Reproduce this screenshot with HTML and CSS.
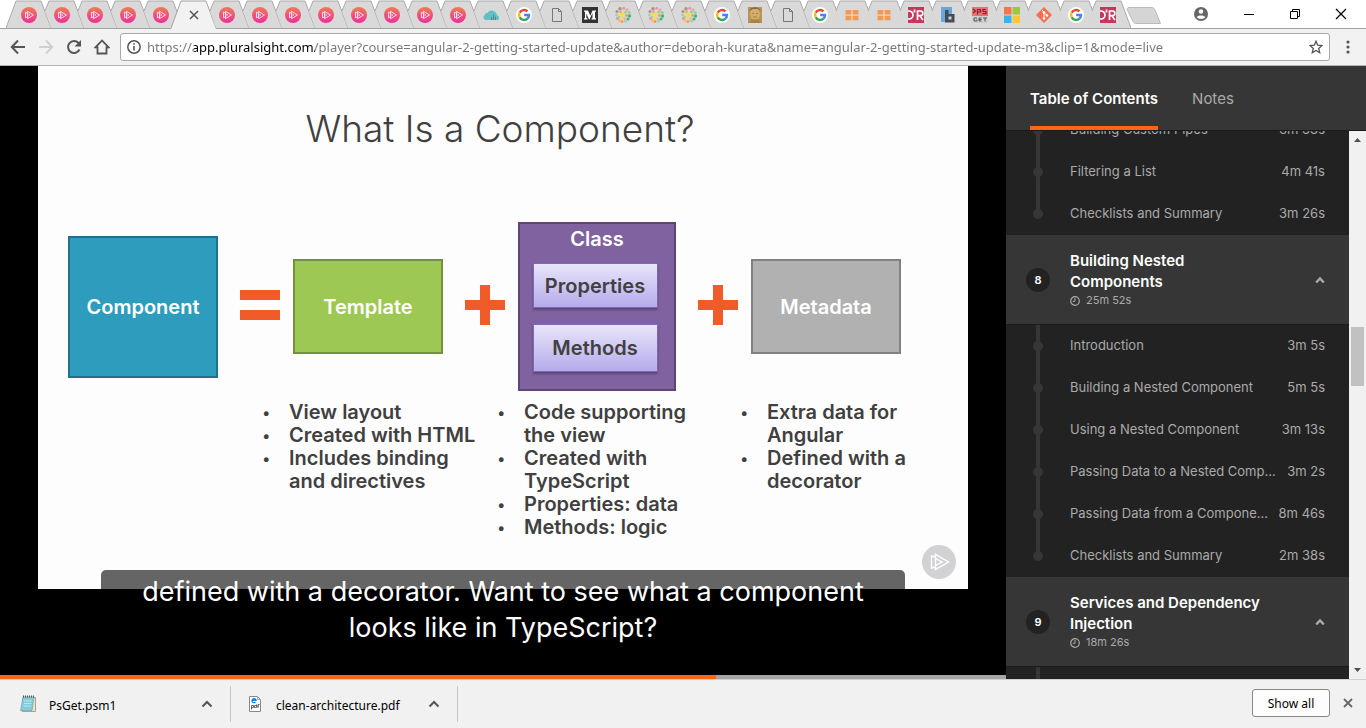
FILE: index.html
```html
<!DOCTYPE html>
<html lang="en">
<head>
<meta charset="utf-8">
<title>Angular 2: Getting Started</title>
<link rel="stylesheet" href="styles.css">
</head>
<body>
<svg class="sprite" aria-hidden="true">
  <defs>
    <linearGradient id="ps-fill" x1="0" y1="0" x2="0" y2="1"><stop offset="0" stop-color="#f37a52"/><stop offset="1" stop-color="#ee2f9b"/></linearGradient>
  </defs>
  <symbol id="shape-full" viewBox="0 0 45 28"><path d="M0 28 10 1H35L45 28Z" fill="#d9d9d9"/><path d="M0 28 10 1H35L45 28" fill="none" stroke="#aaa"/></symbol>
  <symbol id="shape" viewBox="0 0 45 28"><path d="M6 11 10 1H35L45 28H12Z" fill="#d9d9d9"/><path d="M6 11 10 1H35L45 28" fill="none" stroke="#aaa"/></symbol>
  <symbol id="shape-active" viewBox="0 0 45 29"><path d="M0 29 10 1H35L45 29Z" fill="#f2f2f2"/><path d="M0 28 10 1H35L45 28" fill="none" stroke="#a2a2a2"/></symbol>
  <symbol id="ps" viewBox="0 0 16 16"><circle cx="8" cy="8" r="8" fill="url(#ps-fill)"/><path d="M4.500 5.200V10.800L6.500 9.800M4.500 5.200 6.500 6.200M6.500 4.300V11.700L12.500 8Z" fill="none" stroke="#fde" stroke-width="1"/><path d="M6.500 6.500 9 8 6.500 9.500" fill="none" stroke="#fde" stroke-width=".7"/></symbol>
  <symbol id="google" viewBox="0 0 16 16"><circle cx="8" cy="8" r="8" fill="#fff"/><g fill="none" stroke-width="2.400"><path d="M11.500 4.400A5 5 0 0 0 3.700 5.600" stroke="#ea4335"/><path d="M3.700 5.600A5 5 0 0 0 3.700 10.400" stroke="#fbbc05"/><path d="M3.700 10.400A5 5 0 0 0 11.400 11.700" stroke="#34a853"/><path d="M11.400 11.700A5 5 0 0 0 13 8H8.200" stroke="#4285f4"/></g></symbol>
  <symbol id="doc" viewBox="0 0 16 16"><path d="M3.500 1.500H9.500L12.500 4.500V14.500H3.500ZM9.500 1.500V4.500H12.500" fill="none" stroke="#777"/></symbol>
  <symbol id="cloud" viewBox="0 0 16 16"><path d="M2.500 13A2.800 2.800 0 0 1 1.500 8.200A3 3 0 0 1 4.500 6A4.500 4.500 0 0 1 12 5A3 3 0 0 1 13.800 8.200A2.500 2.500 0 0 1 14.500 13Z" fill="#5fc0c5"/><path d="M8.500 10V13M10.500 7.500V13M12.500 9.500V13" stroke="#488c94"/></symbol>
  <symbol id="medium" viewBox="0 0 16 16"><path d="M0 0H16V16H0Z" fill="#333"/><path d="M2 3.500H6L8.300 8.800 10.500 3.500H14V4.500L13 5V11L14 11.500V12.500H9.500V11.500L10.500 11V6L7.500 12.500H7L4.300 6.400V11L5.500 11.500V12.500H2V11.500L3 11V5L2 4.500Z" fill="#fff"/></symbol>
  <symbol id="flower" viewBox="0 0 16 16">
    <g fill="#b1907f"><circle cx="5" cy="1.800" r="1.700"/><circle cx="2" cy="4.500" r="1.500"/></g>
    <g fill="#e79aa5"><circle cx="8.700" cy="1.300" r="1.500"/><circle cx="5.500" cy="4.800" r="1.300"/></g>
    <g fill="#f4a3a0"><circle cx="12" cy="2.800" r="1.600"/></g>
    <g fill="#8fd3a0"><circle cx="10.500" cy="5.200" r="1.400"/><circle cx="14.200" cy="5.500" r="1.600"/></g>
    <g fill="#3fb87a"><circle cx="14.500" cy="9" r="1.700"/><circle cx="13" cy="12" r="1.600"/></g>
    <g fill="#8ed2dc"><circle cx="1.500" cy="8" r="1.400"/><circle cx="10.500" cy="14" r="1.500"/><circle cx="3.800" cy="10" r="1.300"/></g>
    <g fill="#f79c61"><circle cx="2.500" cy="11.500" r="1.600"/><circle cx="7" cy="14.500" r="1.500"/><circle cx="11.500" cy="8.500" r="1.400"/></g>
    <g fill="#f3b98b"><circle cx="4.500" cy="13.500" r="1.500"/><circle cx="9.500" cy="11.500" r="1.400"/></g>
    <g fill="#f5df45"><circle cx="7.500" cy="7.500" r="2"/><circle cx="6.500" cy="10.500" r="1.600"/><circle cx="4" cy="7" r="1.200"/></g>
  </symbol>
  <symbol id="photo" viewBox="0 0 16 16"><path d="M1 0H15V16H1Z" fill="#ba9356"/><ellipse cx="8" cy="7" rx="5" ry="6" fill="#d4ac6c"/><path d="M2 4C4-1 12-1 14 4L11 2H6Z" fill="#8c6937"/><path d="M2 16 5 12.500H11L14 16Z" fill="#a8803f"/><path d="M5 6.500H7M9 6.500H11M6 10H10" stroke="#9b7440" stroke-width=".8"/></symbol>
  <symbol id="blocks" viewBox="0 0 16 16"><path d="M1.500 3H7.300V7.500H1.500ZM8.700 3H14.500V7.500H8.700ZM1.500 8.700H7.300V13.200H1.500ZM8.700 8.700H14.500V13.200H8.700Z" fill="#f8994d"/></symbol>
  <symbol id="oreilly" viewBox="0 0 16 16"><path d="M0 0H16V16H0Z" fill="#c7365b"/><path d="M0 4H1A4 4 0 0 1 1 12H0M6.500 2.500V5.500M9.500 13V4H12.500A2.300 2.300 0 0 1 12.500 8.700H9.500M12 9 15 13" fill="none" stroke="#fff" stroke-width="1.700"/></symbol>
  <symbol id="bitly" viewBox="0 0 16 16"><path d="M1 0H12V15H1Z" fill="#68a7db"/><path d="M5 3H8.500V7H14.500V15.500H5Z" fill="#454c54"/><path d="M8.500 9.500H11.500V12.500H8.500Z" fill="#c5d7e6"/></symbol>
  <symbol id="psget" viewBox="0 0 16 16"><path d="M0 0H16V9H0Z" fill="#f26d6d"/><path d="M0 9H16V16H0Z" fill="#d0d0d0"/><path d="M1 2 3.500 4 1 6M5.500 7.500V2.500H8.500V5H5.500M14 2.500H11V4.500H14V6.700H10.500" fill="none" stroke="#633" stroke-width="1.200"/><path d="M5 11H2V14H5V12.500M9.500 11H7V14H9.500M7 12.500H9.500M11 11H15M13 11V14.500" fill="none" stroke="#555"/></symbol>
  <symbol id="windows" viewBox="0 0 16 16"><path d="M0 0H7.500V7.500H0Z" fill="#f8734e"/><path d="M8.500 0H16V7.500H8.500Z" fill="#9aca3c"/><path d="M0 8.500H7.500V16H0Z" fill="#37b4ed"/><path d="M8.500 8.500H16V16H8.500Z" fill="#fdc733"/></symbol>
  <symbol id="git" viewBox="0 0 16 16"><path d="M8 0 16 8 8 16 0 8Z" fill="#f4704f"/><path d="M6 3 8 5.500V11.500M8 5.500 11 8.500" stroke="#fff" fill="none"/><g fill="#fff"><circle cx="8" cy="5.500" r="1.300"/><circle cx="8" cy="11.500" r="1.300"/><circle cx="11" cy="8.500" r="1.300"/></g></symbol>
  <symbol id="chevron" viewBox="0 0 12 12"><path d="M1.500 8.500 6 4 10.500 8.500" fill="none" stroke="currentColor" stroke-width="2"/></symbol>
  <symbol id="chevron-bold" viewBox="0 0 10 10"><path d="M1.200 7.500 5 3.500 8.800 7.500" fill="none" stroke="currentColor" stroke-width="2.400"/></symbol>
  <symbol id="clock" viewBox="0 0 10 10"><circle cx="5" cy="5" r="4.300" fill="none" stroke="currentColor" stroke-width="1.200"/><path d="M5 2V5.300H2.700" fill="none" stroke="currentColor"/></symbol>
</svg>

<header class="tabstrip">
  <nav class="tabs" aria-label="Open tabs">
    <button class="tab" aria-label="Pluralsight"><svg class="tab-shape"><use href="#shape-full"/></svg><svg class="tab-icon"><use href="#ps"/></svg></button>
    <button class="tab" aria-label="Pluralsight"><svg class="tab-shape"><use href="#shape"/></svg><svg class="tab-icon"><use href="#ps"/></svg></button>
    <button class="tab" aria-label="Pluralsight"><svg class="tab-shape"><use href="#shape"/></svg><svg class="tab-icon"><use href="#ps"/></svg></button>
    <button class="tab" aria-label="Pluralsight"><svg class="tab-shape"><use href="#shape"/></svg><svg class="tab-icon"><use href="#ps"/></svg></button>
    <button class="tab" aria-label="Pluralsight"><svg class="tab-shape"><use href="#shape"/></svg><svg class="tab-icon"><use href="#ps"/></svg></button>
    <button class="tab tab-active" aria-label="Close tab"><svg class="tab-shape"><use href="#shape-active"/></svg><svg class="tab-icon" viewBox="0 0 16 16"><path d="M4 4 12 12M12 4 4 12" stroke="#555" stroke-width="1.500"/></svg></button>
    <button class="tab" aria-label="Pluralsight"><svg class="tab-shape"><use href="#shape"/></svg><svg class="tab-icon"><use href="#ps"/></svg></button>
    <button class="tab" aria-label="Pluralsight"><svg class="tab-shape"><use href="#shape"/></svg><svg class="tab-icon"><use href="#ps"/></svg></button>
    <button class="tab" aria-label="Pluralsight"><svg class="tab-shape"><use href="#shape"/></svg><svg class="tab-icon"><use href="#ps"/></svg></button>
    <button class="tab" aria-label="Pluralsight"><svg class="tab-shape"><use href="#shape"/></svg><svg class="tab-icon"><use href="#ps"/></svg></button>
    <button class="tab" aria-label="Pluralsight"><svg class="tab-shape"><use href="#shape"/></svg><svg class="tab-icon"><use href="#ps"/></svg></button>
    <button class="tab" aria-label="Pluralsight"><svg class="tab-shape"><use href="#shape"/></svg><svg class="tab-icon"><use href="#ps"/></svg></button>
    <button class="tab" aria-label="Pluralsight"><svg class="tab-shape"><use href="#shape"/></svg><svg class="tab-icon"><use href="#ps"/></svg></button>
    <button class="tab" aria-label="Pluralsight"><svg class="tab-shape"><use href="#shape"/></svg><svg class="tab-icon"><use href="#ps"/></svg></button>
    <button class="tab" aria-label="Cloud"><svg class="tab-shape"><use href="#shape"/></svg><svg class="tab-icon"><use href="#cloud"/></svg></button>
    <button class="tab" aria-label="Google"><svg class="tab-shape"><use href="#shape"/></svg><svg class="tab-icon"><use href="#google"/></svg></button>
    <button class="tab" aria-label="Document"><svg class="tab-shape"><use href="#shape"/></svg><svg class="tab-icon"><use href="#doc"/></svg></button>
    <button class="tab" aria-label="Medium"><svg class="tab-shape"><use href="#shape"/></svg><svg class="tab-icon"><use href="#medium"/></svg></button>
    <button class="tab" aria-label="Blog"><svg class="tab-shape"><use href="#shape"/></svg><svg class="tab-icon"><use href="#flower"/></svg></button>
    <button class="tab" aria-label="Blog"><svg class="tab-shape"><use href="#shape"/></svg><svg class="tab-icon"><use href="#flower"/></svg></button>
    <button class="tab" aria-label="Blog"><svg class="tab-shape"><use href="#shape"/></svg><svg class="tab-icon"><use href="#flower"/></svg></button>
    <button class="tab" aria-label="Google"><svg class="tab-shape"><use href="#shape"/></svg><svg class="tab-icon"><use href="#google"/></svg></button>
    <button class="tab" aria-label="Profile"><svg class="tab-shape"><use href="#shape"/></svg><svg class="tab-icon"><use href="#photo"/></svg></button>
    <button class="tab" aria-label="Document"><svg class="tab-shape"><use href="#shape"/></svg><svg class="tab-icon"><use href="#doc"/></svg></button>
    <button class="tab" aria-label="Google"><svg class="tab-shape"><use href="#shape"/></svg><svg class="tab-icon"><use href="#google"/></svg></button>
    <button class="tab" aria-label="Blocks"><svg class="tab-shape"><use href="#shape"/></svg><svg class="tab-icon"><use href="#blocks"/></svg></button>
    <button class="tab" aria-label="Blocks"><svg class="tab-shape"><use href="#shape"/></svg><svg class="tab-icon"><use href="#blocks"/></svg></button>
    <button class="tab" aria-label="O'Reilly"><svg class="tab-shape"><use href="#shape"/></svg><svg class="tab-icon"><use href="#oreilly"/></svg></button>
    <button class="tab" aria-label="Article"><svg class="tab-shape"><use href="#shape"/></svg><svg class="tab-icon"><use href="#bitly"/></svg></button>
    <button class="tab" aria-label="PsGet"><svg class="tab-shape"><use href="#shape"/></svg><svg class="tab-icon"><use href="#psget"/></svg></button>
    <button class="tab" aria-label="Microsoft"><svg class="tab-shape"><use href="#shape"/></svg><svg class="tab-icon"><use href="#windows"/></svg></button>
    <button class="tab" aria-label="Git"><svg class="tab-shape"><use href="#shape"/></svg><svg class="tab-icon"><use href="#git"/></svg></button>
    <button class="tab" aria-label="Google"><svg class="tab-shape"><use href="#shape"/></svg><svg class="tab-icon"><use href="#google"/></svg></button>
    <button class="tab" aria-label="O'Reilly"><svg class="tab-shape"><use href="#shape"/></svg><svg class="tab-icon"><use href="#oreilly"/></svg></button>
  </nav>
  <button class="new-tab" aria-label="New tab"><svg width="36" height="18" viewBox="0 0 36 18"><path d="M2 .5H26Q28 .5 29 3L34.500 16.500H10Q8 16.500 7 14.500L1 2Z" fill="#d5d5d5" stroke="#bbb"/></svg></button>
  <div class="window-buttons">
    <button class="account" aria-label="Account"><svg width="14" height="14" viewBox="0 0 14 14"><circle cx="7" cy="7" r="7" fill="#666"/><circle cx="7" cy="4.500" r="2.200" fill="#fff"/><path d="M2.800 10.200C3.500 7.800 10.500 7.800 11.200 10.200 9.500 12.500 4.500 12.500 2.800 10.200" fill="#fff"/></svg></button>
    <button aria-label="Minimize"><svg width="12" height="12" viewBox="0 0 12 12"><path d="M1 6.500H11" stroke="#000"/></svg></button>
    <button aria-label="Restore"><svg width="12" height="12" viewBox="0 0 12 12"><path d="M1.500 3.500H8.500V10.500H1.500ZM3.500 3.500V1.500H10.500V8.500H8.500" fill="none" stroke="#000"/></svg></button>
    <button aria-label="Close window"><svg width="12" height="12" viewBox="0 0 12 12"><path d="M1 1 11 11M11 1 1 11" stroke="#000" stroke-width="1.200"/></svg></button>
  </div>
</header>

<div class="toolbar">
  <button aria-label="Back"><svg width="16" height="16" viewBox="0 0 16 16"><path d="M15 8H2M8 1.500 1.800 8 8 14.500" fill="none" stroke="#555" stroke-width="2"/></svg></button>
  <button aria-label="Forward"><svg width="16" height="16" viewBox="0 0 16 16"><path d="M1 8H14M8 1.500 14.200 8 8 14.500" fill="none" stroke="#d0d0d0" stroke-width="2"/></svg></button>
  <button aria-label="Reload"><svg width="16" height="16" viewBox="0 0 16 16"><path d="M13.500 10.500A6 6 0 1 1 12.500 4L14 5.500" fill="none" stroke="#555" stroke-width="2"/><path d="M15 1V7.500H8.500Z" fill="#555"/></svg></button>
  <button aria-label="Home"><svg width="16" height="16" viewBox="0 0 16 16"><path d="M8 1.500 1.500 8.300H3.500V14.500H12.500V8.300H14.500Z" fill="none" stroke="#555" stroke-width="1.800"/></svg></button>
  <div class="address">
    <svg width="14" height="14" viewBox="0 0 14 14"><circle cx="7" cy="7" r="6.200" fill="none" stroke="#555" stroke-width="1.500"/><path d="M7 6V10.500M7 3.200V4.800" stroke="#555" stroke-width="1.600"/></svg>
    <input class="url" type="text" aria-label="Address" value="https://app.pluralsight.com/player?course=angular-2-getting-started-update&amp;author=deborah-kurata&amp;name=angular-2-getting-started-update-m3&amp;clip=1&amp;mode=live">
    <button aria-label="Bookmark"><svg width="14" height="14" viewBox="0 0 14 14"><path d="M7 1.200 8.700 5.200 13 5.600 9.700 8.400 10.700 12.700 7 10.400 3.300 12.700 4.300 8.400 1 5.600 5.300 5.200Z" fill="none" stroke="#555" stroke-width="1.300"/></svg></button>
  </div>
  <button class="menu" aria-label="Menu"><svg width="4" height="14" viewBox="0 0 4 14"><g fill="#555"><circle cx="2" cy="2" r="1.600"/><circle cx="2" cy="7" r="1.600"/><circle cx="2" cy="12" r="1.600"/></g></svg></button>
</div>

<main class="course">
  <section class="player">
    <article class="slide">
      <h1>What Is a Component?</h1>
      <div class="diagram">
        <div class="box box-component">Component</div>
        <svg class="operator" viewBox="0 0 40 40"><path d="M0 5H40V15H0ZM0 25H40V35H0Z" fill="#f15a29"/></svg>
        <div class="box box-template">Template</div>
        <svg class="operator" viewBox="0 0 40 40"><path d="M15 0H25V15H40V25H25V40H15V25H0V15H15Z" fill="#f15a29"/></svg>
        <div class="box box-class">
          <span>Class</span>
          <div class="member">Properties</div>
          <div class="member">Methods</div>
        </div>
        <svg class="operator" viewBox="0 0 40 40"><path d="M15 0H25V15H40V25H25V40H15V25H0V15H15Z" fill="#f15a29"/></svg>
        <div class="box box-metadata">Metadata</div>
      </div>
      <div class="notes">
        <ul>
          <li>View layout</li>
          <li>Created with HTML</li>
          <li>Includes binding<br>and directives</li>
        </ul>
        <ul>
          <li>Code supporting<br>the view</li>
          <li>Created with<br>TypeScript</li>
          <li>Properties: data</li>
          <li>Methods: logic</li>
        </ul>
        <ul>
          <li>Extra data for<br>Angular</li>
          <li>Defined with a<br>decorator</li>
        </ul>
      </div>
      <svg class="watermark" viewBox="0 0 34 34"><circle cx="17" cy="17" r="17" fill="#d2d1d3"/><path d="M13.500 9.500V24.500L26.500 17ZM13.500 12 9.500 11V23L13.500 22M13.500 13.500 20 17 13.500 20.500" fill="none" stroke="#fff" stroke-width="1.400"/></svg>
    </article>
    <p class="caption">defined with a decorator. Want to see what a component<br>looks like in TypeScript?</p>
    <div class="progress"><div class="progress-played"></div></div>
  </section>

  <aside class="sidebar">
    <nav class="side-tabs">
      <button class="side-tab side-tab-on">Table of Contents</button>
      <button class="side-tab">Notes</button>
    </nav>
    <div class="contents">
      <div class="modules">
        <ul class="clips clips-scrolled">
          <li><a href="#">Building Custom Pipes</a><span>6m 33s</span></li>
          <li><a href="#">Filtering a List</a><span>4m 41s</span></li>
          <li><a href="#">Checklists and Summary</a><span>3m 26s</span></li>
        </ul>
        <div class="module">
          <span class="module-number">8</span>
          <div class="module-text"><h2>Building Nested Components</h2><p><svg width="10" height="10"><use href="#clock"/></svg>25m 52s</p></div>
          <button aria-label="Collapse module 8"><svg width="10" height="10"><use href="#chevron-bold"/></svg></button>
        </div>
        <ul class="clips">
          <li><a href="#">Introduction</a><span>3m 5s</span></li>
          <li><a href="#">Building a Nested Component</a><span>5m 5s</span></li>
          <li><a href="#">Using a Nested Component</a><span>3m 13s</span></li>
          <li><a href="#">Passing Data to a Nested Comp…</a><span>3m 2s</span></li>
          <li><a href="#">Passing Data from a Compone…</a><span>8m 46s</span></li>
          <li><a href="#">Checklists and Summary</a><span>2m 38s</span></li>
        </ul>
        <div class="module">
          <span class="module-number">9</span>
          <div class="module-text"><h2>Services and Dependency Injection</h2><p><svg width="10" height="10"><use href="#clock"/></svg>18m 26s</p></div>
          <button aria-label="Collapse module 9"><svg width="10" height="10"><use href="#chevron-bold"/></svg></button>
        </div>
        <div class="clips-next"></div>
      </div>
      <div class="scrollbar">
        <svg width="7" height="4" viewBox="0 0 7 4"><path d="M0 4 3.500 0 7 4Z" fill="#505050"/></svg>
        <div class="track"><div class="thumb"></div></div>
        <svg width="7" height="4" viewBox="0 0 7 4"><path d="M0 0 3.500 4 7 0Z" fill="#505050"/></svg>
      </div>
    </div>
  </aside>
</main>

<footer class="downloads">
  <div class="download">
    <svg width="18" height="18" viewBox="0 0 18 18"><path d="M4 2.500H16.500V16.500H3Z" fill="#e9e4cf" stroke="#b0a27f"/><path d="M4 2H15L13 15.500H1.500Z" fill="#86cbd9" stroke="#5a9dac" stroke-width=".6"/><path d="M5 6H13M5 8.500H12.500M4.500 11H12" stroke="#b8e4ec"/><path d="M4 1.500H15" stroke="#555" stroke-width="2" stroke-dasharray="1 1"/></svg>
    <span>PsGet.psm1</span>
    <button aria-label="Options for PsGet.psm1"><svg width="12" height="12"><use href="#chevron"/></svg></button>
  </div>
  <div class="download">
    <svg width="18" height="18" viewBox="0 0 18 18"><path d="M3.500 1.500H11.500L14.500 4.500V16.500H3.500Z" fill="#fff" stroke="#888"/><path d="M11.500 1.500V4.500H14.500" fill="none" stroke="#aaa"/><path d="M6 5.300H10A2 2 0 1 0 9.500 7" fill="none" stroke="#1683d8" stroke-width="1.400"/><path d="M5.500 14.500V10.500H7.500V12.500H5.500M10.500 9.500V12.500H8.500V10.500H10.500M12 13V9.500H13.500M11.500 11H13" fill="none" stroke="#444" stroke-width=".8"/></svg>
    <span>clean-architecture.pdf</span>
    <button aria-label="Options for clean-architecture.pdf"><svg width="12" height="12"><use href="#chevron"/></svg></button>
  </div>
  <button class="show-all">Show all</button>
  <button class="dismiss" aria-label="Close downloads bar"><svg width="10" height="10" viewBox="0 0 10 10"><path d="M1 1 9 9M9 1 1 9" stroke="#666" stroke-width="1.800"/></svg></button>
</footer>
</body>
</html>
```
FILE: styles.css
```css
* { box-sizing: border-box; }
body { margin: 0; height: 100vh; display: flex; flex-direction: column; overflow: hidden; background: #fff; font-family: "Noto Sans", sans-serif; }
button { padding: 0; border: 0; background: none; font: inherit; color: inherit; display: flex; align-items: center; justify-content: center; }
svg { display: block; flex: none; }
h1, h2, p, ul { margin: 0; padding: 0; font-weight: inherit; }
ul { list-style: none; }
.sprite { position: absolute; width: 0; height: 0; }

.tabstrip { flex: none; height: 28px; display: flex; padding-left: 12px; background: #fff; }
.tabs { flex: 0 1 1112px; display: flex; min-width: 0; }
.tab { flex: 0 1 33px; min-width: 0; position: relative; }
.tab:nth-child(n+25) { flex-basis: 32px; }
.tab-shape { position: absolute; top: 0; left: -6px; width: 45px; height: 28px; overflow: visible; }
.tab-active .tab-shape { height: 29px; }
.tab-icon { position: relative; width: 16px; height: 16px; margin-top: 2px; }
.new-tab { margin: 7px 0 0 2px; align-items: flex-start; }
.window-buttons { margin-left: auto; padding-right: 2px; display: flex; }
.window-buttons button { width: 46px; height: 27px; }
.window-buttons .account { margin-right: 2px; }

.toolbar { flex: none; height: 38px; display: flex; align-items: center; gap: 12px; padding: 0 15px 0 10px; background: #f2f2f2; border-top: 1px solid #a2a2a2; border-bottom: 1px solid #b0b5b0; }
.toolbar > button { width: 16px; height: 28px; }
.address { flex: 1; min-width: 0; height: 28px; display: flex; align-items: center; gap: 6px; margin: 0 3px 0 -2px; padding: 0 6px; background: #fff; border: 1px solid #a9a9a9; border-radius: 3px; }
.url { flex: 1; min-width: 0; height: 24px; padding: 0; border: 0; outline: 0; font: 13px "Noto Sans", sans-serif; color: #767676; background: linear-gradient(to right, #767676 47px, #000 47px 168px, #767676 168px); -webkit-background-clip: text; background-clip: text; -webkit-text-fill-color: transparent; }
.toolbar > .menu { width: 6px; }

.course { flex: 1; min-height: 0; display: flex; font-family: Inter, sans-serif; }
.player { flex: 1; min-width: 0; position: relative; display: flex; flex-direction: column; background: #000; }
.slide { position: relative; height: 523px; margin: 0 38px; padding-top: 40px; background: #fefdfe; color: #404040; font-weight: 600; font-size: 20px; }
.slide h1 { height: 116px; padding-right: 6px; text-align: center; font-size: 37px; line-height: 46px; font-weight: 300; }
.diagram { display: flex; align-items: center; justify-content: space-between; padding: 0 67px 0 30px; color: #fff; }
.box { display: flex; align-items: center; justify-content: center; width: 150px; height: 95px; border: 2px solid; }
.box-component { height: 142px; background: #2d9cbd; border-color: #1f7189; }
.box-template { background: #9dc853; border-color: #72933b; }
.box-metadata { background: #b1b1b1; border-color: #818181; }
.box-class { width: 158px; height: 169px; flex-direction: column; justify-content: flex-start; padding-top: 3px; background: #8162a0; border-color: #5d4675; line-height: 24px; }
.member { width: 125px; height: 45px; margin: 12px 4px 0 0; display: flex; align-items: center; justify-content: center; background: linear-gradient(#e9e5fb, #b5abec); border: 1px solid #7d68b3; box-shadow: 0 2px 2px #5d4675; color: #404040; }
.member + .member { margin-top: 16px; height: 48px; }
.operator { width: 40px; height: 40px; margin: 0 0 3px 8px; }
.notes { display: flex; margin-top: 10px; padding-left: 224px; line-height: 23px; }
.notes ul { width: 235px; }
.notes ul + ul { width: 243px; }
.notes ul:last-child { width: 200px; }
.notes li { display: flex; }
.notes li::before { content: "•"; width: 27px; font-weight: 400; font-size: 15px; }
.watermark { position: absolute; right: 12px; bottom: 10px; width: 34px; height: 34px; }
.caption { position: absolute; left: 101px; right: 101px; top: 504px; padding-top: 4px; height: 80px; border-radius: 5px; background: rgba(0,0,0,.6); color: #fff; text-align: center; font-size: 27px; line-height: 36px; font-weight: 400; }
.progress { margin-top: auto; height: 4px; background: #a5a5a5; }
.progress-played { width: 71.2%; height: 4px; background: #ff6516; }

.sidebar { width: 360px; flex: none; display: flex; flex-direction: column; background: #222; color: #aaa; font-size: 13px; }
.side-tabs { flex: none; height: 65px; display: flex; gap: 34px; padding-left: 24px; background: #363636; border-bottom: 1px solid #1a1a1a; font-size: 15px; }
.side-tab { border-top: 4px solid transparent; border-bottom: 4px solid transparent; }
.side-tab-on { color: #fff; font-weight: 600; border-bottom-color: #ff6516; }
.contents { flex: 1; min-height: 0; display: flex; }
.modules { flex: 1; min-width: 0; overflow: hidden; }
.clips li { position: relative; height: 42px; display: flex; align-items: center; gap: 8px; padding: 0 24px 2px 64px; }
.clips a { flex: 1; min-width: 0; color: inherit; text-decoration: none; white-space: nowrap; }
.clips-scrolled { margin-top: -22px; }
.clips li::before { content: ""; position: absolute; left: 30px; top: 0; width: 4px; height: 42px; background: #363636; }
.clips li:last-child::before { height: 21px; }
.clips li::after { content: ""; position: absolute; left: 27px; top: 16px; width: 10px; height: 10px; border-radius: 50%; background: #363636; }
.module { height: 90px; display: flex; align-items: center; padding: 0 24px 0 20px; background: #363636; border-bottom: 1px solid #1a1a1a; }
.module-number { width: 24px; height: 24px; margin-right: 20px; display: flex; align-items: center; justify-content: center; border-radius: 50%; background: #222; color: #fff; font-size: 11px; font-weight: 600; }
.module-text { width: 204px; margin-right: auto; }
.module h2 { font-size: 15px; line-height: 21px; font-weight: 600; color: #fff; }
.module p { display: flex; align-items: center; gap: 6px; font-size: 11px; line-height: 17px; }
.clips-next { width: 4px; height: 42px; margin-left: 30px; background: #363636; }
.scrollbar { width: 17px; flex: none; display: flex; flex-direction: column; align-items: center; padding: 7px 0; background: #f1f1f1; }
.track { flex: 1; align-self: stretch; padding: 185px 2px 0; }
.thumb { height: 59px; background: #c1c1c1; }

.downloads { flex: none; height: 49px; display: flex; align-items: center; padding-right: 13px; background: #f1f1f1; border-top: 1px solid #d0d0d0; font-size: 12px; }
.download { height: 36px; display: flex; align-items: center; gap: 12px; width: 231px; padding: 0 17px 0 19px; border-right: 1px solid #c4c4c4; }
.download + .download { width: 227px; padding-left: 15px; }
.download span { padding-top: 3px; }
.download button { margin-left: auto; color: #555; }
.show-all { margin: 0 0 2px auto; width: 78px; height: 28px; background: #fdfdfd; border: 1px solid #888; border-radius: 3px; }
.dismiss { margin: 0 0 2px 13px; }
```
